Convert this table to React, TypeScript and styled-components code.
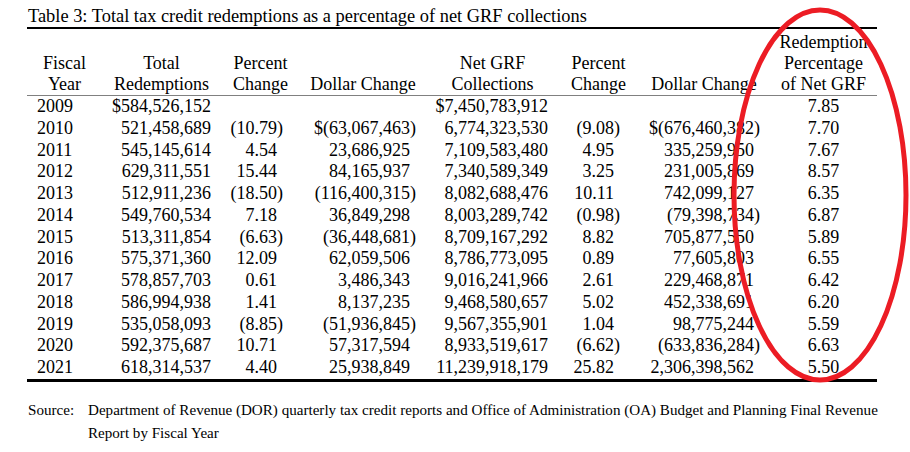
import React from "react";
import styled, { createGlobalStyle } from "styled-components";

const GlobalStyle = createGlobalStyle`
  html, body {
    margin: 0;
    padding: 0;
    background: #ffffff;
  }
  body {
    font-family: "Liberation Serif", "Times New Roman", serif;
    color: #000000;
  }
`;

const Page = styled.div`
  position: relative;
  width: 910px;
  height: 452px;
  overflow: hidden;
  background: #ffffff;
`;

const Content = styled.div`
  padding-left: 27px;
  width: 850px;
`;

const Title = styled.div`
  margin-top: 5px;
  padding-left: 1px;
  font-size: 18.4px;
  line-height: 22px;
  height: 22px;
  border-bottom: 2px solid #000;
  white-space: nowrap;
`;

const Table = styled.table`
  width: 850px;
  table-layout: fixed;
  border-collapse: collapse;
  font-size: 18px;
`;

const HeadRow = styled.tr`
  border-bottom: 1px solid #808080;
`;

const Th = styled.th`
  font-weight: normal;
  text-align: center;
  vertical-align: bottom;
  line-height: 21px;
  padding: 2px 0 0 0;
  white-space: nowrap;
  height: 64px;
`;

const BodyRow = styled.tr<{ $last?: boolean }>`
  height: 21.75px;
  border-bottom: ${(p) => (p.$last ? "3px solid #000" : "none")};
`;

const Td = styled.td<{ $align: string; $pl: number; $pr: number }>`
  text-align: ${(p) => p.$align};
  padding: 0 ${(p) => p.$pr}px 0 ${(p) => p.$pl}px;
  line-height: 21.75px;
  white-space: nowrap;
`;

const Paren = styled.span<{ $ghost?: boolean }>`
  visibility: ${(p) => (p.$ghost ? "hidden" : "visible")};
`;

const Source = styled.div`
  display: flex;
  margin-top: 17px;
  padding-left: 28px;
  font-size: 15.1px;
  line-height: 23px;
`;

const SourceLabel = styled.div`
  width: 60px;
  flex: none;
`;

const SourceText = styled.div`
  white-space: nowrap;
`;

const Overlay = styled.svg`
  position: absolute;
  left: 0;
  top: 0;
  pointer-events: none;
`;

type Col = { w: number; align: string; pl: number; pr: number; paren?: boolean };

const cols: Col[] = [
  { w: 75, align: "left", pl: 10, pr: 0 },
  { w: 119, align: "right", pl: 0, pr: 10 },
  { w: 79, align: "right", pl: 0, pr: 17, paren: true },
  { w: 126, align: "right", pl: 0, pr: 10, paren: true },
  { w: 133, align: "right", pl: 0, pr: 11 },
  { w: 79, align: "right", pl: 0, pr: 18, paren: true },
  { w: 132, align: "right", pl: 0, pr: 10, paren: true },
  { w: 107, align: "center", pl: 0, pr: 0 },
];

const headers: string[][] = [
  ["Fiscal", "Year"],
  ["Total", "Redemptions"],
  ["Percent", "Change"],
  ["Dollar Change"],
  ["Net GRF", "Collections"],
  ["Percent", "Change"],
  ["Dollar Change"],
  ["Redemption", "Percentage", "of Net GRF"],
];

const rows: string[][] = [
  ["2009", "$584,526,152", "", "", "$7,450,783,912", "", "", "7.85"],
  ["2010", "521,458,689", "(10.79)", "$(63,067,463)", "6,774,323,530", "(9.08)", "$(676,460,382)", "7.70"],
  ["2011", "545,145,614", "4.54", "23,686,925", "7,109,583,480", "4.95", "335,259,950", "7.67"],
  ["2012", "629,311,551", "15.44", "84,165,937", "7,340,589,349", "3.25", "231,005,869", "8.57"],
  ["2013", "512,911,236", "(18.50)", "(116,400,315)", "8,082,688,476", "10.11", "742,099,127", "6.35"],
  ["2014", "549,760,534", "7.18", "36,849,298", "8,003,289,742", "(0.98)", "(79,398,734)", "6.87"],
  ["2015", "513,311,854", "(6.63)", "(36,448,681)", "8,709,167,292", "8.82", "705,877,550", "5.89"],
  ["2016", "575,371,360", "12.09", "62,059,506", "8,786,773,095", "0.89", "77,605,803", "6.55"],
  ["2017", "578,857,703", "0.61", "3,486,343", "9,016,241,966", "2.61", "229,468,871", "6.42"],
  ["2018", "586,994,938", "1.41", "8,137,235", "9,468,580,657", "5.02", "452,338,691", "6.20"],
  ["2019", "535,058,093", "(8.85)", "(51,936,845)", "9,567,355,901", "1.04", "98,775,244", "5.59"],
  ["2020", "592,375,687", "10.71", "57,317,594", "8,933,519,617", "(6.62)", "(633,836,284)", "6.63"],
  ["2021", "618,314,537", "4.40", "25,938,849", "11,239,918,179", "25.82", "2,306,398,562", "5.50"],
];

function Cell({ value, col }: { value: string; col: Col }) {
  let content: React.ReactNode = value;
  if (col.paren && value) {
    if (value.endsWith(")")) {
      content = (
        <>
          {value.slice(0, -1)}
          <Paren>)</Paren>
        </>
      );
    } else {
      content = (
        <>
          {value}
          <Paren $ghost>)</Paren>
        </>
      );
    }
  }
  return (
    <Td $align={col.align} $pl={col.pl} $pr={col.pr}>
      {content}
    </Td>
  );
}

export default function App() {
  return (
    <Page>
      <GlobalStyle />
      <Content>
        <Title>Table 3: Total tax credit redemptions as a percentage of net GRF collections</Title>
        <Table>
          <colgroup>
            {cols.map((c, i) => (
              <col key={i} style={{ width: c.w }} />
            ))}
          </colgroup>
          <thead>
            <HeadRow>
              {headers.map((h, i) => (
                <Th key={i}>
                  {h.map((line, j) => (
                    <React.Fragment key={j}>
                      {j > 0 && <br />}
                      {line}
                    </React.Fragment>
                  ))}
                </Th>
              ))}
            </HeadRow>
          </thead>
          <tbody>
            {rows.map((r, i) => (
              <BodyRow key={i} $last={i === rows.length - 1}>
                {r.map((v, j) => (
                  <Cell key={j} value={v} col={cols[j]} />
                ))}
              </BodyRow>
            ))}
          </tbody>
        </Table>
      </Content>
      <Source>
        <SourceLabel>Source:</SourceLabel>
        <SourceText>
          Department of Revenue (DOR) quarterly tax credit reports and Office of Administration (OA) Budget and Planning Final Revenue
          <br />
          Report by Fiscal Year
        </SourceText>
      </Source>
      <Overlay width={910} height={452} viewBox="0 0 910 452">
        <ellipse cx={820} cy={195} rx={86} ry={185} fill="none" stroke="#ec1c24" strokeWidth={5} />
      </Overlay>
    </Page>
  );
}
